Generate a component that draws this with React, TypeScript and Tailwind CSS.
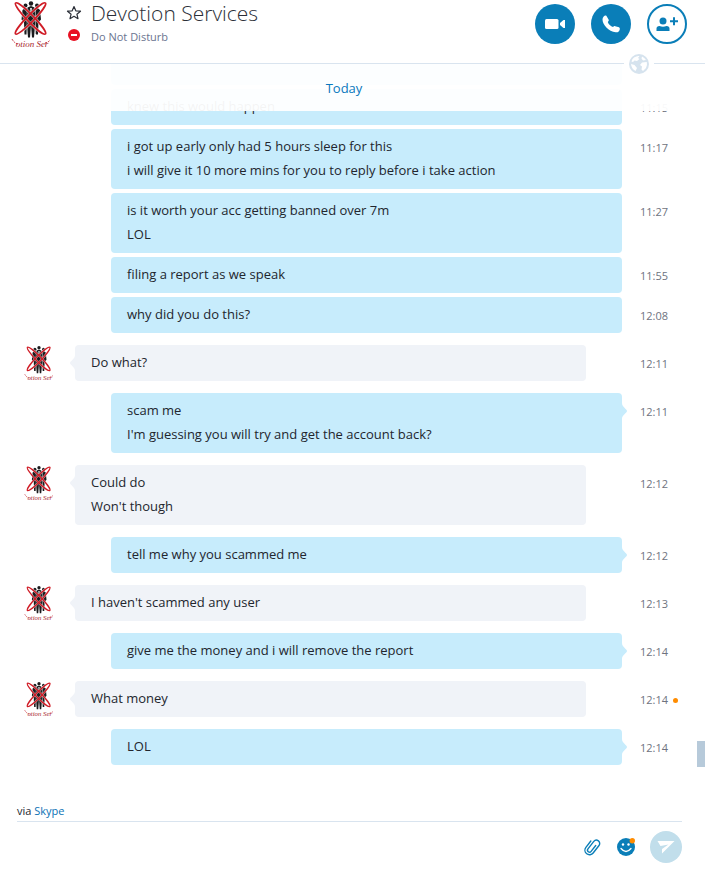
import { useState } from 'react';
import clsx from 'clsx';

type Message = {
  from: 'me' | 'them';
  lines: string[];
  time: string;
  tail?: boolean;
  unread?: boolean;
};

const messages: Message[] = [
  { from: 'me', lines: [''], time: '' },
  { from: 'me', lines: ['knew this would happen'], time: '11:15' },
  { from: 'me', lines: ['i got up early only had 5 hours sleep for this', 'i will give it 10 more mins for you to reply before i take action'], time: '11:17' },
  { from: 'me', lines: ['is it worth your acc getting banned over 7m', 'LOL'], time: '11:27' },
  { from: 'me', lines: ['filing a report as we speak'], time: '11:55' },
  { from: 'me', lines: ['why did you do this?'], time: '12:08' },
  { from: 'them', lines: ['Do what?'], time: '12:11', tail: true },
  { from: 'me', lines: ['scam me', "I'm guessing you will try and get the account back?"], time: '12:11', tail: true },
  { from: 'them', lines: ['Could do', "Won't though"], time: '12:12', tail: true },
  { from: 'me', lines: ['tell me why you scammed me'], time: '12:12', tail: true },
  { from: 'them', lines: ["I haven't scammed any user"], time: '12:13', tail: true },
  { from: 'me', lines: ['give me the money and i will remove the report'], time: '12:14', tail: true },
  { from: 'them', lines: ['What money'], time: '12:14', tail: true, unread: true },
  { from: 'me', lines: ['LOL'], time: '12:14', tail: true },
];

function Avatar({ className }: { className?: string }) {
  return (
    <svg viewBox="0 0 40 48" className={className} role="img" aria-label="Devotion Services">
      <g fill="#1b1b1d">
        <circle cx="20" cy="3.500" r="2.200" />
        <circle cx="14.500" cy="5.500" r="2" />
        <circle cx="26" cy="5.500" r="2" />
        <path d="M16.500 7.500l3.500-1.500 3.500 1.500 1 12-1.500 18h-2L20 25l-1 12.500h-2l-1.500-18z" />
        <path d="M11.500 10l3-2.500 1.500 1v15l-.5 11h-2l-.5-12-2.500-3z" />
        <path d="M29 10l-3-2.500-1.500 1v15l.5 11h2l.5-12 2.500-3z" />
      </g>
      <path d="M19 8l1 8 1-8z" fill="#ddd" />
      <path d="M16 9v25M24.500 9v25" stroke="#999" strokeWidth=".6" />
      <g fill="none" stroke="#fff" strokeWidth="2.800" opacity=".6">
        <ellipse cx="19.500" cy="18.500" rx="21.500" ry="3.500" transform="rotate(46 19.500 18.500)" />
        <ellipse cx="19.500" cy="18.500" rx="21.500" ry="3.500" transform="rotate(-46 19.500 18.500)" />
      </g>
      <g fill="none" stroke="#d01c26" strokeWidth="1.700">
        <ellipse cx="19.500" cy="18.500" rx="21.500" ry="3.500" transform="rotate(46 19.500 18.500)" />
        <ellipse cx="19.500" cy="18.500" rx="21.500" ry="3.500" transform="rotate(-46 19.500 18.500)" />
      </g>
      <path d="M1 39q2 4 6 5M34 43q4-1 5-3" fill="none" stroke="#c4202a" strokeWidth=".9" strokeDasharray="2 1" />
      <text x="21" y="46.500" textAnchor="middle" className="fill-[#a8232b] font-['Liberation_Serif',serif] text-[9px] italic">
        otion Ser
      </text>
    </svg>
  );
}

function Tail({ side }: { side: 'left' | 'right' }) {
  return (
    <svg
      viewBox="0 0 6 16"
      aria-hidden="true"
      className={clsx('absolute top-2.5 h-4 w-1.5', side === 'right' ? 'left-full fill-[#c7ecfc]' : 'right-full -scale-x-100 fill-[#f0f3f8]')}
    >
      <path d="M0 0C0 4 5 6 5 8S0 12 0 16z" />
    </svg>
  );
}

function MessageRow({ message, grouped }: { message: Message; grouped: boolean }) {
  const mine = message.from === 'me';
  return (
    <li className={clsx('flex shrink-0 items-start', grouped ? 'mt-1' : 'mt-3')}>
      {mine ? <div className="w-[111px] shrink-0" /> : (
        <div className="w-[75px] shrink-0 pl-6">
          <Avatar className="h-9 w-[30px]" />
        </div>
      )}
      <div className={clsx('relative min-w-0 flex-1 rounded px-4 pt-[5px] pb-[7px] leading-6', mine ? 'bg-[#c7ecfc]' : 'mr-9 bg-[#f0f3f8]')}>
        {message.tail && <Tail side={mine ? 'right' : 'left'} />}
        {message.lines.map((line) => <p key={line} className="min-h-6">{line}</p>)}
      </div>
      <div className="flex w-[83px] shrink-0 items-center gap-[5px] pt-[7px] pl-[18px] text-[11px] leading-6 text-[#6e7380]">
        <time>{message.time}</time>
        {message.unread && <span className="size-[5px] rounded-full bg-[#ff8c00]" />}
      </div>
    </li>
  );
}

function Header() {
  return (
    <header className="relative z-10 flex h-16 shrink-0 items-start border-b border-[#d9e4ef] pr-[18px] pl-[11px]">
      <Avatar className="h-12 w-10 shrink-0" />
      <div className="ml-[15px] flex flex-col items-center gap-2 pt-[5px]">
        <button type="button" aria-label="Add to favourites">
          <svg viewBox="0 0 16 16" className="size-4" fill="none" stroke="#2b2f38" strokeWidth="1.200" strokeLinejoin="round">
            <path d="M8 1.500l1.800 4.300 4.700.4-3.600 3 1.100 4.500L8 11.300l-4 2.400 1.100-4.500-3.600-3 4.700-.4z" />
          </svg>
        </button>
        <svg viewBox="0 0 12 12" className="size-3" aria-hidden="true">
          <circle cx="6" cy="6" r="6" fill="#e81123" />
          <path d="M3 6h6" stroke="#fff" strokeWidth="2" />
        </svg>
      </div>
      <div className="ml-[9px] min-w-0 flex-1">
        <h1 className="truncate text-[21px] leading-[26px] font-light text-[#2b2f38]">Devotion Services</h1>
        <p className="text-[11px] leading-[22px] text-[#6b7590]">Do Not Disturb</p>
      </div>
      <div className="flex gap-4 pt-1">
        <button type="button" aria-label="Video call" className="grid size-10 place-items-center rounded-full bg-[#0a7eb8]">
          <svg viewBox="0 0 20 12" className="h-3 w-5" fill="#fff">
            <rect x="0" y="1" width="13.500" height="10" rx="1.500" />
            <path d="M15 5l3.500-3h1.500v8h-1.500L15 7z" />
          </svg>
        </button>
        <button type="button" aria-label="Call" className="grid size-10 place-items-center rounded-full bg-[#0a7eb8]">
          <svg viewBox="0 0 18 18" className="size-[18px]" fill="#fff">
            <path d="M1.500 1.800C2.500.5 3.800.2 4.500 1l2.200 3.800c.3.700 0 1.300-.9 2.200C6.500 9.300 8.700 11.300 11 12c.9-.9 1.500-1.100 2.200-.8l3.800 1c.8.500.9 1.200.8 2-.3 2-1.700 3.300-4 3.100C6.500 16.500.500 9.500.500 4.500c0-1.100.4-2 1-2.700z" />
          </svg>
        </button>
        <button type="button" aria-label="Add people" className="grid size-10 place-items-center rounded-full border-2 border-[#0a7eb8]">
          <svg viewBox="0 0 22 14" className="h-3.5 w-[22px]" fill="#0a7eb8">
            <circle cx="7" cy="4" r="3.500" />
            <path d="M.5 14v-2.500Q.5 9 3.500 9 7 10.500 10.500 9q3 0 3 2.500V14z" />
            <path d="M14 3.200h3V.2h2v3h3v2h-3v3h-2v-3h-3z" />
          </svg>
        </button>
      </div>
      <div className="absolute right-[51px] -bottom-[11px] bg-white px-[5px]">
        <svg viewBox="0 0 20 20" className="size-5" aria-hidden="true">
          <circle cx="10" cy="10" r="10" fill="#d6e3ee" />
          <path d="M5 3.500Q8 1.500 10.500 2L9 4l1.500 1L8 7 5.500 6.500 4 8 2.500 7.500Q3 5 5 3.500zM2 10l3.500 1 2.500 3-1.500 3Q2.500 15 2 10zM13 2.500q2.500 1 4 3.500l-3 .5-1.500-2zM13 8.500L17.800 8q.7 3-.8 6l-3 3-1.500-1.500.5-3-2-1.500z" fill="#fff" />
        </svg>
      </div>
    </header>
  );
}

function Composer() {
  const [draft, setDraft] = useState('');
  return (
    <footer className="shrink-0 pr-[23px] pl-[17px]">
      <p className="text-[11px] leading-5">
        via <a href="#skype" className="text-[#0a72b5]">Skype</a>
      </p>
      <form className="flex items-center border-t border-[#d9e4ef] pt-[9px] pb-2" onSubmit={(e) => e.preventDefault()}>
        <input
          aria-label="Message"
          value={draft}
          onChange={(e) => setDraft(e.target.value)}
          className="h-8 min-w-0 flex-1 bg-transparent outline-none"
        />
        <button type="button" aria-label="Attach file" className="ml-4">
          <svg viewBox="0 0 18 20" className="h-5 w-[18px]" fill="none" stroke="#0a7eb8" strokeWidth="1.400" strokeLinecap="round">
            <path d="M11 6.500v7.500a2 2 0 0 1-4 0V4.500a3.300 3.300 0 0 1 6.600 0V14a4.600 4.600 0 0 1-9.200 0V6" transform="rotate(38 9 10)" />
          </svg>
        </button>
        <button type="button" aria-label="Emoticons" className="ml-4">
          <svg viewBox="0 0 18 18" className="size-[18px]">
            <circle cx="9" cy="9" r="9" fill="#0a7eb8" />
            <circle cx="6" cy="6.500" r="1.200" fill="#fff" />
            <circle cx="11.500" cy="6.500" r="1.200" fill="#fff" />
            <path d="M4 10.500Q9 16.500 14 10.500" fill="none" stroke="#fff" strokeWidth="1.300" strokeLinecap="round" />
            <circle cx="15.300" cy="2.700" r="2.700" fill="#ff8c00" />
          </svg>
        </button>
        <button type="submit" aria-label="Send" className="ml-[15px] grid size-8 place-items-center rounded-full bg-[#c1deeb]">
          <svg viewBox="0 0 18 14" className="h-3.5 w-[18px]" fill="#fff">
            <path d="M.5 1h17L5 13.500V9L11.500 4.500 3.500 6z" />
          </svg>
        </button>
      </form>
    </footer>
  );
}

export default function App() {
  return (
    <div className="flex h-screen flex-col overflow-hidden bg-white font-['Open_Sans','Noto_Sans',sans-serif] text-[13px] text-[#22262e]">
      <Header />
      <main className="relative min-h-0 flex-1">
        <ul className="flex h-full flex-col justify-end overflow-hidden pb-9">
          {messages.map((message, i) => (
            <MessageRow key={i} message={message} grouped={messages[i - 1]?.from === message.from} />
          ))}
        </ul>
        <div className="absolute inset-x-0 top-0 h-[47px] bg-white/95 pt-3.5 pr-[17px] text-center text-[13px] leading-5 text-[#0a78bd]">
          Today
        </div>
        <div className="absolute right-0 bottom-[34px] h-[26px] w-2 bg-[#b7cada]" />
      </main>
      <Composer />
    </div>
  );
}
